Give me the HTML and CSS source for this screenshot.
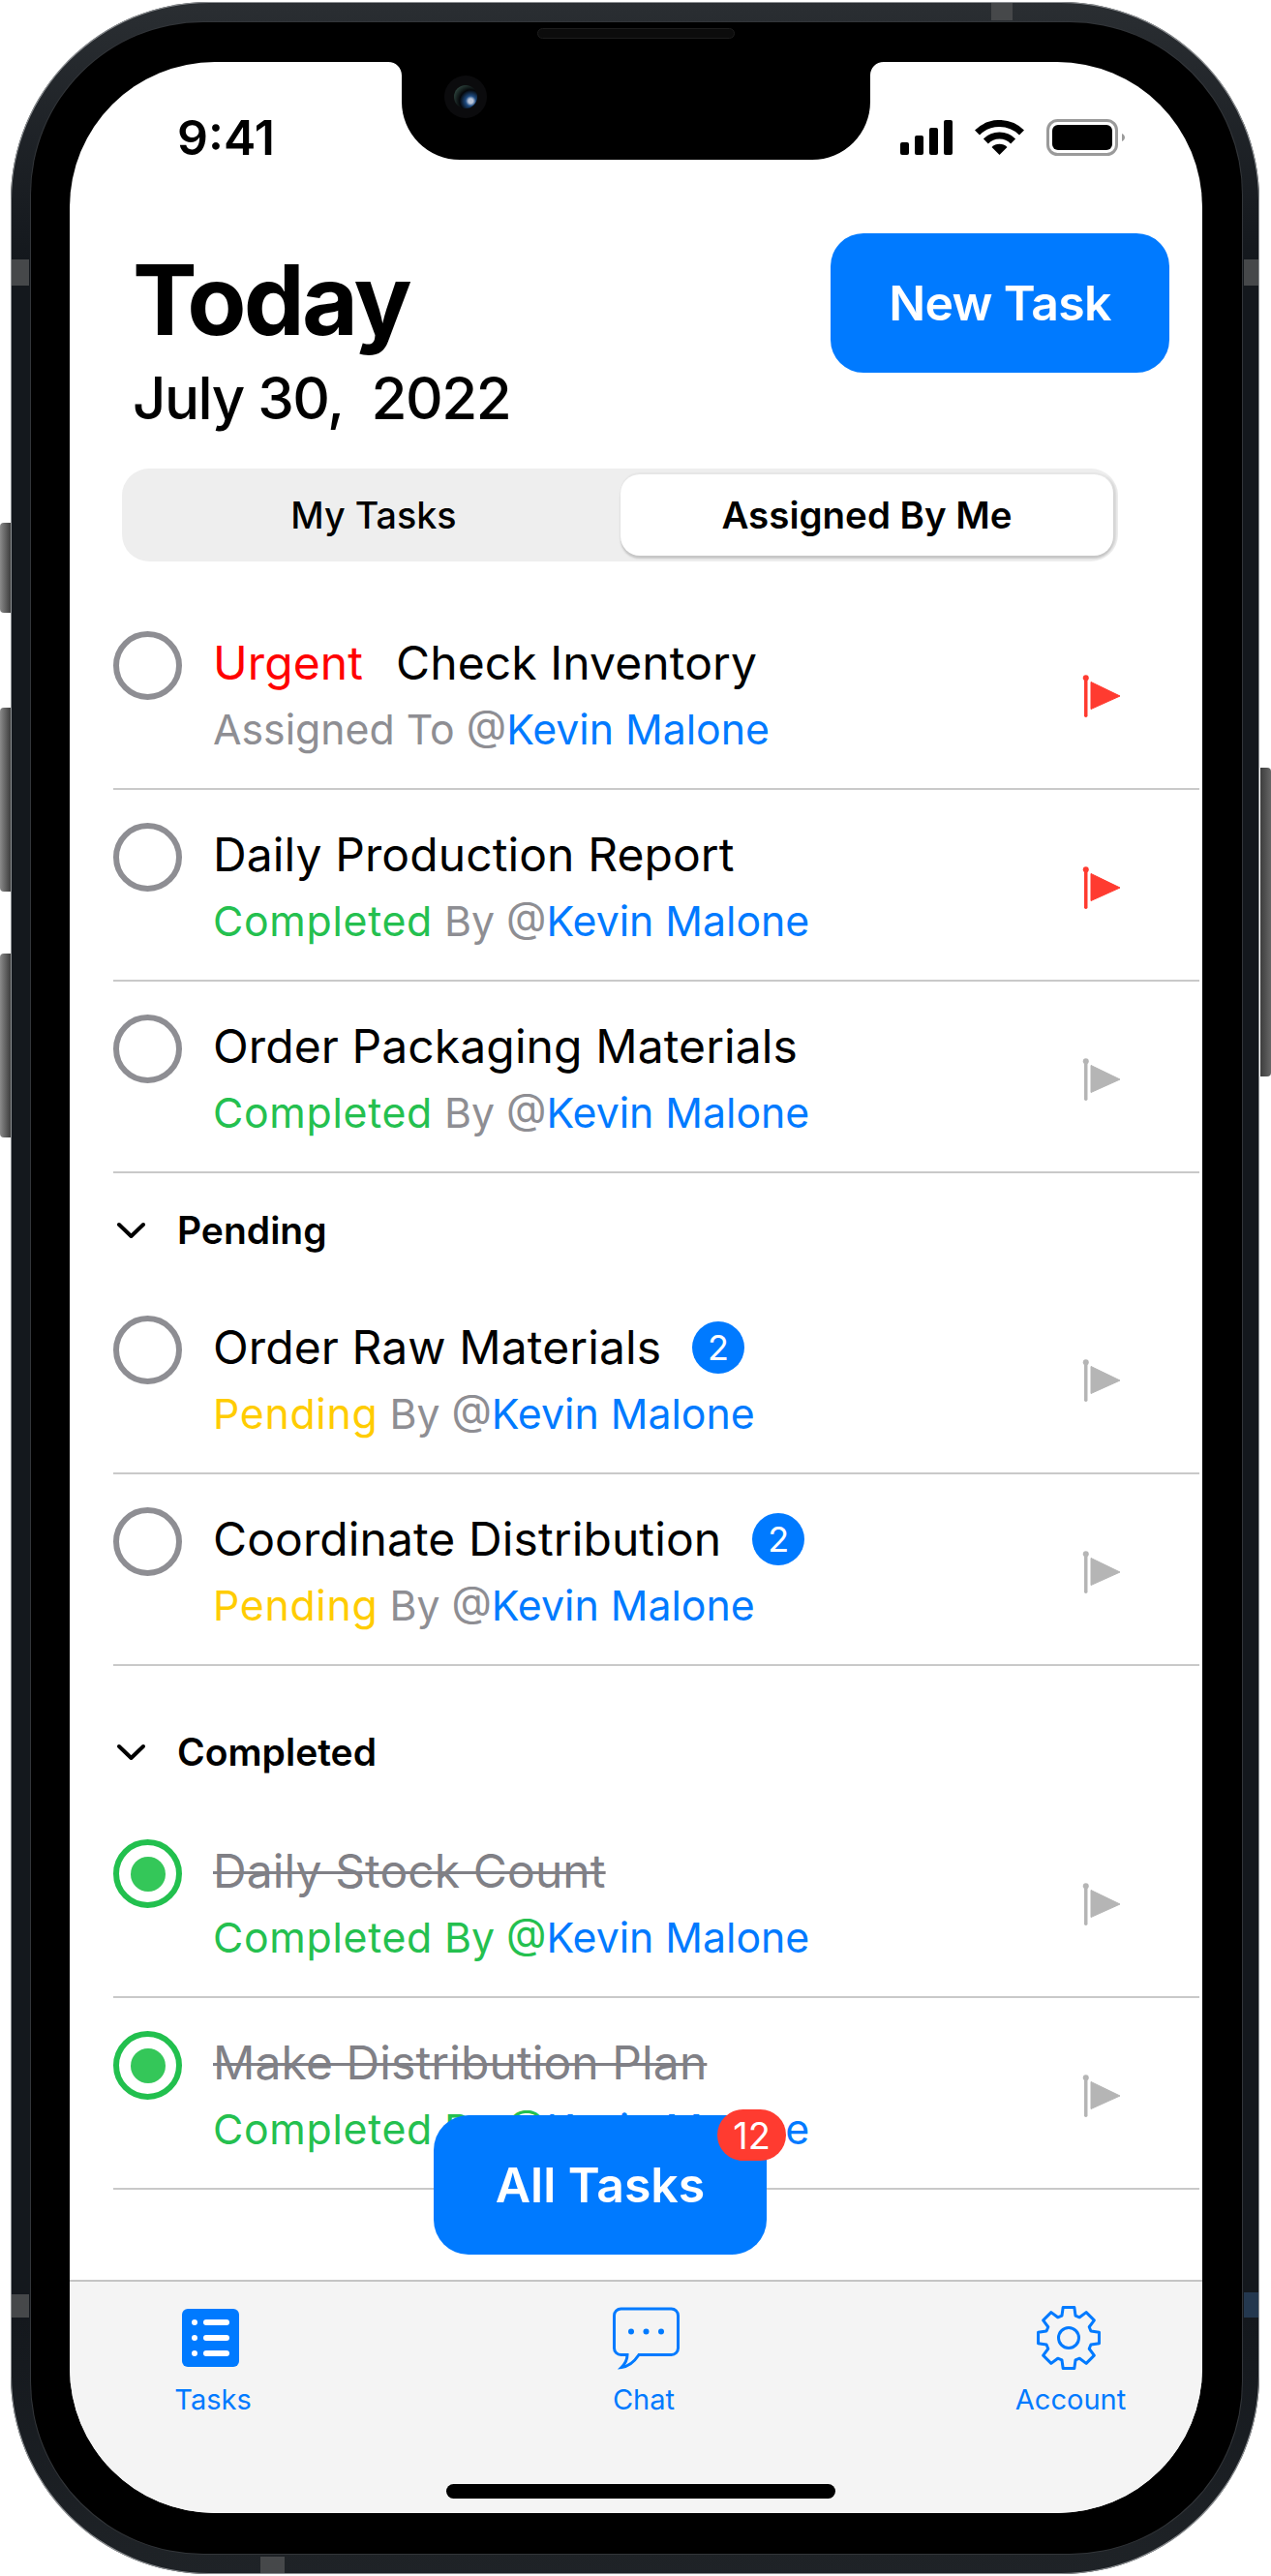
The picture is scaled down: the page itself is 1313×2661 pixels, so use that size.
FILE: index.html
```html
<!DOCTYPE html>
<html lang="en">
<head>
  <meta charset="UTF-8" />
  <meta name="viewport" content="width=device-width, initial-scale=1.0" />
  <title>Today</title>
  <link rel="stylesheet" href="styles.css">
</head>
<body>
  <div class="phone">
    <span class="side-btn left-a"></span>
    <span class="side-btn left-b"></span>
    <span class="side-btn left-c"></span>
    <span class="side-btn right-a"></span>
    <span class="band band-lt"></span>
    <span class="band band-rt"></span>
    <span class="band band-lb"></span>
    <span class="band band-rb"></span>
    <span class="band band-top"></span>
    <span class="band band-bottom"></span>

    <div class="bezel">
      <span class="speaker"></span>
      <div class="screen">
        <svg class="notch" width="512" height="101" viewBox="0 0 512 101">
          <path d="M0 0H512C504 0 498 6 498 14V41A60 60 0 0 1 438 101H74A60 60 0 0 1 14 41V14C14 6 8 0 0 0Z" fill="#000"/>
        </svg>
        <span class="camera"><span class="lens"></span></span>

        <div class="status-bar">
          <span class="time">9:41</span>
          <div class="status-icons">
            <svg width="54" height="36" viewBox="0 0 54 36">
              <rect x="0" y="23" width="9" height="13" rx="2"/>
              <rect x="15" y="16" width="9" height="20" rx="2"/>
              <rect x="30" y="8" width="9" height="28" rx="2"/>
              <rect x="45" y="0" width="9" height="36" rx="2"/>
            </svg>
            <svg width="51" height="36" viewBox="0 0 51 36">
              <path d="M2.5 13A32.5 32.5 0 0 1 48.500 13" fill="none" stroke="#000" stroke-width="7"/>
              <path d="M11.4 21.900A20 20 0 0 1 39.600 21.900" fill="none" stroke="#000" stroke-width="7"/>
              <path d="M25.500 36L17.500 28A11.300 11.300 0 0 1 33.500 28Z"/>
            </svg>
            <svg width="81" height="38" viewBox="0 0 81 38">
              <rect x="1.500" y="1.500" width="71" height="35" rx="10" fill="none" stroke="#9a9a9a" stroke-width="3"/>
              <rect x="6" y="6" width="62" height="26" rx="6"/>
              <path d="M78 15C80 16 81 17.500 81 19S80 22 78 23Z" fill="#9a9a9a"/>
            </svg>
          </div>
        </div>

        <header class="top">
          <div class="heading">
            <h1>Today</h1>
            <p class="date">July 30,&nbsp; 2022</p>
          </div>
          <button class="btn new-task" type="button">New Task</button>
        </header>

        <div class="segment">
          <div class="seg-item">My Tasks</div>
          <div class="seg-item active">Assigned By Me</div>
        </div>

        <div class="list">
          <div class="row">
            <span class="check"></span>
            <div class="row-text">
              <div class="title"><span class="urgent">Urgent</span>Check Inventory</div>
              <div class="sub">Assigned To @<span class="who">Kevin Malone</span></div>
            </div>
            <svg class="flag red" width="40" height="44" viewBox="0 0 40 44"><use href="#flag"/></svg>
          </div>
          <div class="row">
            <span class="check"></span>
            <div class="row-text">
              <div class="title">Daily Production Report</div>
              <div class="sub"><span class="green">Completed</span> By @<span class="who">Kevin Malone</span></div>
            </div>
            <svg class="flag red" width="40" height="44" viewBox="0 0 40 44"><use href="#flag"/></svg>
          </div>
          <div class="row">
            <span class="check"></span>
            <div class="row-text">
              <div class="title">Order Packaging Materials</div>
              <div class="sub"><span class="green">Completed</span> By @<span class="who">Kevin Malone</span></div>
            </div>
            <svg class="flag" width="40" height="44" viewBox="0 0 40 44"><use href="#flag"/></svg>
          </div>

          <div class="section">
            <svg width="31" height="18" viewBox="0 0 31 18"><path d="M3 3L15.500 15L28 3" fill="none" stroke="#000" stroke-width="4" stroke-linecap="round" stroke-linejoin="round"/></svg>
            <span>Pending</span>
          </div>
          <div class="row">
            <span class="check"></span>
            <div class="row-text">
              <div class="title">Order Raw Materials<span class="count">2</span></div>
              <div class="sub"><span class="yellow">Pending</span> By @<span class="who">Kevin Malone</span></div>
            </div>
            <svg class="flag" width="40" height="44" viewBox="0 0 40 44"><use href="#flag"/></svg>
          </div>
          <div class="row">
            <span class="check"></span>
            <div class="row-text">
              <div class="title">Coordinate Distribution<span class="count">2</span></div>
              <div class="sub"><span class="yellow">Pending</span> By @<span class="who">Kevin Malone</span></div>
            </div>
            <svg class="flag" width="40" height="44" viewBox="0 0 40 44"><use href="#flag"/></svg>
          </div>

          <div class="section section-done">
            <svg width="31" height="18" viewBox="0 0 31 18"><path d="M3 3L15.500 15L28 3" fill="none" stroke="#000" stroke-width="4" stroke-linecap="round" stroke-linejoin="round"/></svg>
            <span>Completed</span>
          </div>
          <div class="row">
            <span class="check done"></span>
            <div class="row-text">
              <div class="title struck">Daily Stock Count</div>
              <div class="sub"><span class="green">Completed</span><span class="green plain"> By @</span><span class="who">Kevin Malone</span></div>
            </div>
            <svg class="flag" width="40" height="44" viewBox="0 0 40 44"><use href="#flag"/></svg>
          </div>
          <div class="row">
            <span class="check done"></span>
            <div class="row-text">
              <div class="title struck">Make Distribution Plan</div>
              <div class="sub"><span class="green">Completed</span><span class="green plain"> By @</span><span class="who">Kevin Malone</span></div>
            </div>
            <svg class="flag" width="40" height="44" viewBox="0 0 40 44"><use href="#flag"/></svg>
          </div>
        </div>

        <button class="btn all-tasks" type="button">All Tasks<span class="all-count">12</span></button>

        <nav class="tab-bar">
          <div class="tabs">
            <div class="tab">
              <svg class="tab-tasks" width="59" height="60" viewBox="0 0 59 60">
                <rect width="59" height="60" rx="6" fill="#007aff"/>
                <g fill="#fff">
                  <circle cx="13" cy="14" r="3"/><rect x="22" y="11" width="27" height="6" rx="3"/>
                  <circle cx="13" cy="30" r="3"/><rect x="22" y="27" width="27" height="6" rx="3"/>
                  <circle cx="13" cy="46" r="3"/><rect x="22" y="43" width="27" height="6" rx="3"/>
                </g>
              </svg>
              <span>Tasks</span>
            </div>
            <div class="tab">
              <svg class="tab-chat" width="69" height="63" viewBox="0 0 69 63">
                <path d="M8.500 1.500H60.500a7 7 0 0 1 7 7V42a7 7 0 0 1-7 7H27C23 55 17 61 9 62C13 58 15 54 15 49H8.500a7 7 0 0 1-7-7V8.500a7 7 0 0 1 7-7Z" fill="none" stroke="#007aff" stroke-width="3"/>
                <circle cx="19" cy="25" r="3" fill="#007aff"/><circle cx="34.500" cy="25" r="3" fill="#007aff"/><circle cx="50" cy="25" r="3" fill="#007aff"/>
              </svg>
              <span>Chat</span>
            </div>
            <div class="tab">
              <svg class="tab-gear" width="70" height="68" viewBox="-35 -34 70 68">
                <polygon points="-7.020,-22.950 -5.830,-31.460 5.830,-31.460 7.020,-22.950 11.260,-21.190 18.120,-26.370 26.370,-18.120 21.190,-11.260 22.950,-7.020 31.460,-5.830 31.460,5.830 22.950,7.020 21.190,11.260 26.370,18.120 18.120,26.370 11.260,21.190 7.020,22.950 5.830,31.460 -5.830,31.460 -7.020,22.950 -11.260,21.190 -18.120,26.370 -26.370,18.120 -21.190,11.260 -22.950,7.020 -31.460,5.830 -31.460,-5.830 -22.950,-7.020 -21.190,-11.260 -26.370,-18.120 -18.120,-26.370 -11.260,-21.190" fill="none" stroke="#007aff" stroke-width="3" stroke-linejoin="round"/>
                <circle r="10.500" fill="none" stroke="#007aff" stroke-width="3"/>
              </svg>
              <span>Account</span>
            </div>
          </div>
          <span class="home-bar"></span>
        </nav>
      </div>
    </div>
  </div>

  <svg width="0" height="0" class="defs">
    <symbol id="flag" viewBox="0 0 40 44">
      <rect x="2" y="3" width="3.500" height="41" rx="1.700" fill="currentColor"/>
      <circle cx="3.750" cy="3.200" r="3" fill="currentColor"/>
      <path d="M9 7.500L39 22L9 35.500Z" fill="currentColor" stroke="currentColor" stroke-linejoin="round"/>
    </symbol>
  </svg>
</body>
</html>
```

FILE: styles.css
```css
* { box-sizing: border-box; }
html, body { margin: 0; padding: 0; background: #fff; }
body { font-family: Inter, "Liberation Sans", sans-serif; color: #000; height: 2661px; overflow: hidden; }

/* device frame */
.phone {
  position: relative;
  width: 1290px;
  height: 2657px;
  margin: 2px 0 0 11px;
  padding: 21px 18px 21px 21px;
  border-radius: 205px;
  background: linear-gradient(#2a2e32, #14181d 10%, #14181d 90%, #1f2327);
  box-shadow: inset 0 0 0 1px #8d9093;
}
.bezel {
  position: relative;
  height: 100%;
  padding: 41px 41px 42px 40px;
  border-radius: 178px;
  background: #000;
  box-shadow: 0 0 0 1px #33363a;
}
.side-btn { position: absolute; width: 11px; background: linear-gradient(90deg, #8a8a8a, #3d3d3d); }
.left-a { left: -11px; top: 538px; height: 93px; border-radius: 4px 0 0 4px; }
.left-b { left: -11px; top: 729px; height: 190px; border-radius: 4px 0 0 4px; }
.left-c { left: -11px; top: 983px; height: 190px; border-radius: 4px 0 0 4px; }
.right-a { right: -12px; top: 791px; height: 319px; border-radius: 0 4px 4px 0; background: linear-gradient(90deg, #3d3d3d, #666); }
.band { position: absolute; background: #46484a; }
.band-lt { left: 1px; top: 266px; width: 18px; height: 27px; }
.band-rt { right: 1px; top: 266px; width: 15px; height: 27px; }
.band-lb { left: 1px; top: 2368px; width: 18px; height: 24px; }
.band-rb { right: 1px; top: 2366px; width: 15px; height: 26px; background: #24384f; }
.band-top { left: 1013px; top: 1px; width: 22px; height: 18px; }
.band-bottom { left: 258px; bottom: 1px; width: 25px; height: 17px; }
.speaker {
  position: absolute; left: 523px; top: 6px; width: 204px; height: 11px;
  border-radius: 6px; background: #0c0c0c; border: 1px solid #1d1d1d;
}

/* screen */
.screen {
  position: relative;
  display: flex;
  flex-direction: column;
  height: 100%;
  overflow: hidden;
  border-radius: 150px;
  background: #fff;
}
.notch { position: absolute; left: 329px; top: 0; }
.camera {
  position: absolute; left: 387px; top: 14px; width: 44px; height: 44px;
  display: flex; align-items: center; justify-content: center;
  border-radius: 50%; background: #0b0b0d;
}
.lens { width: 24px; height: 24px; border-radius: 50%; background: radial-gradient(circle at 72% 68%, #b9c4d8 0 10%, #1d4a80 22%, #05070a 48%, #3c5a50 92%); }

.status-bar {
  display: flex; align-items: center; justify-content: space-between;
  height: 156px; padding: 0 80px 0 111px;
}
.time { font-size: 50px; font-weight: 600; line-height: 1; }
.status-icons { display: flex; align-items: center; gap: 23px; }
.status-icons svg { display: block; }

.top {
  display: flex; justify-content: space-between; align-items: flex-start;
  padding: 21px 34px 0 65px;
  height: 264px;
}
.heading { padding-top: 19px; }
h1 { margin: 0; font-size: 100px; font-weight: 700; line-height: 100px; letter-spacing: -2.8px; }
.date { margin: 21px 0 0; font-size: 60px; font-weight: 500; line-height: 60px; letter-spacing: -1.5px; }

.btn { border: 0; background: #007aff; color: #fff; font-family: inherit; font-size: 50px; font-weight: 600; }
.new-task { width: 350px; height: 144px; border-radius: 34px; letter-spacing: -0.7px; }

.segment {
  display: flex;
  width: 1029px; height: 96px; margin-left: 54px; padding: 6px 5px;
  border-radius: 28px; background: #eee;
}
.seg-item {
  flex: 1; display: flex; align-items: center; justify-content: center;
  font-size: 37.700px; font-weight: 500;
}
.seg-item.active {
  flex: 0 0 509px; font-size: 38.500px; font-weight: 600; background: #fff; border-radius: 20px;
  box-shadow: 0 3px 2px #c6c6c6, 0 -2px 1px #e6e6e6, 3px 0 2px #d6d6d6;
}

/* task list */
.list { margin: 38px 3px 0 45px; }
.row {
  display: flex; align-items: flex-start;
  height: 198px; padding: 34px 81px 0 0;
  border-bottom: 2px solid #c9c9c9;
}
.check {
  flex: none; width: 71px; height: 71px; margin-right: 32px;
  display: flex; align-items: center; justify-content: center;
  border: 6px solid #8e8e93; border-radius: 50%;
}
.check.done { border-color: #22c04e; }
.check.done::after { content: ""; width: 36px; height: 36px; border-radius: 50%; background: #34c759; }
.row-text { flex: 1; padding-top: 5px; }
.title { display: flex; align-items: center; font-size: 48px; line-height: 56px; letter-spacing: 0.1px; }
.title.struck { color: #808086; text-decoration: line-through; text-decoration-thickness: 3px; }
.sub { margin-top: 16px; font-size: 42.800px; line-height: 50px; color: #8e8e93; }
.urgent { color: #ff0000; margin-right: 34px; }
.who { color: #007aff; }
.green { color: #24c04f; letter-spacing: 0.7px; }
.green.plain { letter-spacing: 0; }
.yellow { color: #ffcc00; letter-spacing: 0.7px; }
.count {
  display: flex; align-items: center; justify-content: center;
  width: 54px; height: 54px; margin-left: 32px;
  border-radius: 50%; background: #007aff; color: #fff; font-size: 36px;
}
.flag { flex: none; margin-top: 45px; color: #b5b5b5; }
.flag.red { color: #ff3b30; }
.defs { position: absolute; }

.section {
  display: flex; align-items: center; gap: 32px;
  height: 113px; padding: 4px 0 0 3px;
  font-size: 39px; font-weight: 600;
}
.section-done { height: 145px; padding-top: 32px; }

/* floating button */
.all-tasks {
  position: absolute; left: 376px; top: 2121px;
  width: 344px; height: 144px; border-radius: 36px;
}
.all-count {
  position: absolute; right: -20px; top: -6px;
  display: flex; align-items: center; justify-content: center;
  width: 71px; height: 53px; border-radius: 27px;
  background: #ff3b30; font-size: 38px; font-weight: 400;
}

/* tab bar */
.tab-bar {
  display: flex; flex-direction: column; align-items: center;
  height: 241px; margin-top: auto;
  border-top: 2px solid #c4c4c4; background: #f4f4f4;
}
.tabs {
  display: grid; grid-template-columns: 445px 441px 120px;
  width: 100%; height: 209px; padding: 24px 0 0 88px;
}
.tab {
  display: flex; flex-direction: column; align-items: center; width: 120px;
  color: #007aff; font-size: 29px;
}
.tab svg { display: block; height: 68px; }
.tab-tasks { margin-right: 6px; }
.tab-chat { margin-left: 5px; }
.tab-gear { margin-right: 5px; }
.tab span { margin-top: 12px; line-height: 36px; }
.home-bar { width: 402px; height: 15px; margin-left: 9px; border-radius: 8px; background: #000; }
```
